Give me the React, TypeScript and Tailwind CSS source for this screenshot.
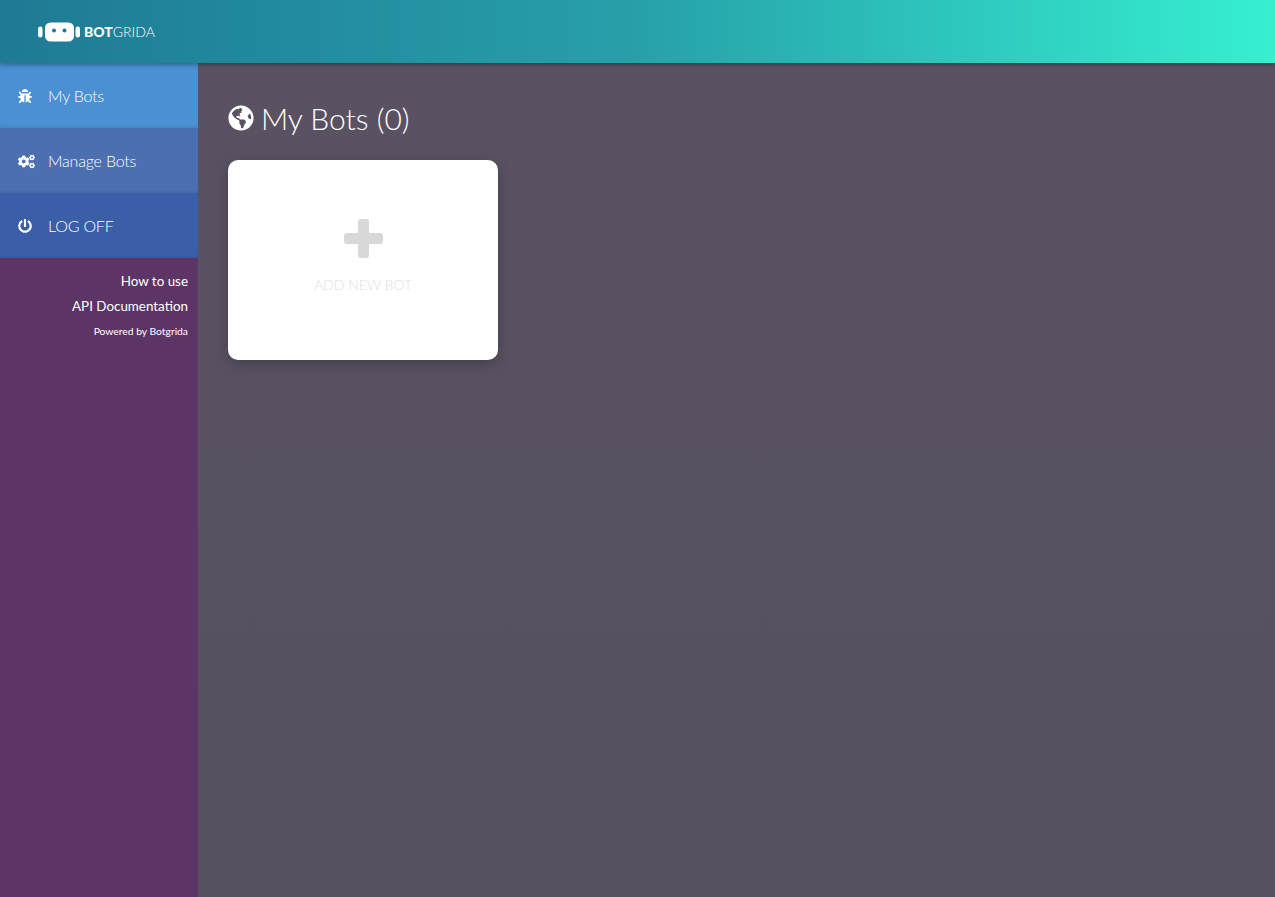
import { FaBug, FaCogs, FaPowerOff, FaGlobeAmericas } from "react-icons/fa";
import type { ReactNode } from "react";

function Logo() {
    return (
        <div className="flex items-center">
            <svg width="44" height="20" viewBox="0 0 44 20" className="shrink-0">
                <rect x="0" y="4.5" width="4.5" height="11" rx="2.2" fill="#fff" />
                <rect x="7" y="0.5" width="29" height="19" rx="5.5" fill="#fff" />
                <circle cx="16" cy="8.5" r="2" fill="#1f7a94" />
                <circle cx="26.5" cy="8.5" r="2" fill="#1f7a94" />
                <rect x="37.5" y="4.5" width="4.5" height="11" rx="2.2" fill="#fff" />
            </svg>
            <span className="ml-[2px] pt-[1px] text-[14px] leading-none text-white">
                <span className="font-black">BOT</span>
                <span className="font-light">GRIDA</span>
            </span>
        </div>
    );
}

function NavItem({ icon, label, bg }: { icon: ReactNode; label: string; bg: string }) {
    return (
        <a className={`flex h-[65px] items-center pl-[18px] pt-[1px] text-white shadow-[inset_0_-2px_2px_rgba(0,0,0,0.06)] ${bg}`}>
            <span className="flex w-[30px] items-center">{icon}</span>
            <span className="text-[16px] font-light tracking-[-0.2px]">{label}</span>
        </a>
    );
}

export default function App() {
    return (
        <div className="flex h-screen flex-col overflow-hidden font-['Lato',sans-serif]">
            <header className="relative z-10 flex h-[63px] shrink-0 items-center bg-gradient-to-r from-[#1f7a94] via-[#27a0aa] to-[#36f0d0] pl-[38px] shadow-[0_2px_4px_rgba(0,0,0,0.3)]">
                <Logo />
            </header>
            <div className="flex min-h-0 flex-1">
                <aside className="flex w-[198px] shrink-0 flex-col bg-[#5c3566]">
                    <NavItem icon={<FaBug className="text-[14px]" />} label="My Bots" bg="bg-[#4a90d2]" />
                    <NavItem icon={<FaCogs className="text-[17px]" />} label="Manage Bots" bg="bg-[#4c6fb0]" />
                    <NavItem icon={<FaPowerOff className="text-[14px]" />} label="LOG OFF" bg="bg-[#3a5fa8]" />
                    <div className="flex flex-col items-end pr-[10px] pt-[10px] text-white">
                        <a className="h-[25px] text-[13.4px] leading-[26px]">How to use</a>
                        <a className="h-[25px] text-[13.4px] leading-[26px]">API Documentation</a>
                        <a className="h-[25px] text-[10.3px] leading-[26px]">Powered by Botgrida</a>
                    </div>
                </aside>
                <main className="flex-1 bg-gradient-to-b from-[#5a5263] to-[#565060] px-[30px] pt-[36px]">
                    <h1 className="flex h-[38px] items-center gap-[7px] text-[30px] font-light text-white">
                        <FaGlobeAmericas className="text-[26px]" />
                        My Bots (0)
                    </h1>
                    <div className="mt-[23px] flex h-[200px] w-[270px] flex-col items-center rounded-[10px] bg-white pt-[59px] shadow-[0_4px_14px_rgba(0,0,0,0.25)]">
                        <svg width="39" height="39" viewBox="0 0 39 39" fill="#d8d8d8">
                            <rect x="14" y="0" width="11" height="39" rx="3" />
                            <rect x="0" y="14" width="39" height="11" rx="3" />
                        </svg>
                        <span className="mt-[16px] text-[14px] font-light text-[#e0e0e0]">ADD NEW BOT</span>
                    </div>
                </main>
            </div>
        </div>
    );
}
